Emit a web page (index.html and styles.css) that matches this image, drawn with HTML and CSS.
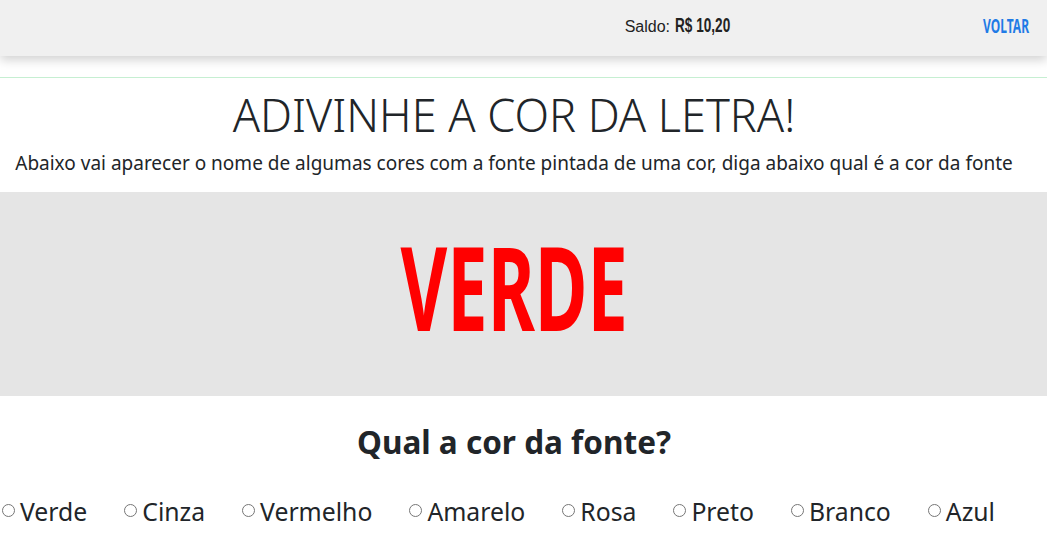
FILE: index.html
```html
<!DOCTYPE html>
<html lang="pt-BR">
<head>
<meta charset="utf-8">
<title>Adivinhe a cor da letra</title>
<link rel="stylesheet" href="styles.css">
</head>
<body>
<header class="topbar">
  <div class="saldo">Saldo: <span class="saldo-valor">R$ 10,20</span></div>
  <a class="voltar" href="#">VOLTAR</a>
</header>
<div class="divider"></div>
<main>
  <h1 class="title">ADIVINHE A COR DA LETRA!</h1>
  <p class="subtitle">Abaixo vai aparecer o nome de algumas cores com a fonte pintada de uma cor, diga abaixo qual é a cor da fonte</p>
  <section class="stage">
    <div class="word">VERDE</div>
  </section>
  <h2 class="question">Qual a cor da fonte?</h2>
  <form class="options">
    <label class="option"><input type="radio" name="cor"><span>Verde</span></label>
    <label class="option"><input type="radio" name="cor"><span>Cinza</span></label>
    <label class="option"><input type="radio" name="cor"><span>Vermelho</span></label>
    <label class="option"><input type="radio" name="cor"><span>Amarelo</span></label>
    <label class="option"><input type="radio" name="cor"><span>Rosa</span></label>
    <label class="option"><input type="radio" name="cor"><span>Preto</span></label>
    <label class="option"><input type="radio" name="cor"><span>Branco</span></label>
    <label class="option"><input type="radio" name="cor"><span>Azul</span></label>
  </form>
</main>
</body>
</html>
```
FILE: styles.css
```css
* { box-sizing: border-box; }
body {
  margin: 0;
  font-family: "Noto Sans", "Open Sans", sans-serif;
  color: #212529;
  background: #fff;
  overflow: hidden;
}
.topbar {
  height: 56px;
  background: #f0f0f0;
  box-shadow: 0 4px 10px rgba(0,0,0,0.18);
  display: flex;
  align-items: center;
  justify-content: flex-end;
  padding: 0 18px 5px 0;
  position: relative;
}
.saldo {
  display: flex;
  align-items: baseline;
  font-family: "Liberation Sans", Arial, sans-serif;
  font-size: 16px;
  color: #222;
  margin-right: 253px;
}
.saldo-valor {
  display: inline-block;
  margin-left: 5px;
  font-weight: bold;
  font-size: 20px;
  color: #222;
  transform: scaleX(0.68);
  transform-origin: left center;
  width: 57px;
  white-space: nowrap;
}
.voltar {
  display: inline-block;
  font-weight: bold;
  font-size: 20px;
  color: #1f7be6;
  text-decoration: none;
  transform: scaleX(0.6);
  transform-origin: right center;
  width: 44px;
  white-space: nowrap;
  direction: rtl;
}
.divider {
  margin-top: 21px;
  height: 1px;
  background: #c6efd2;
}
.title {
  margin: 10px 0 0;
  padding-right: 19px;
  text-align: center;
  font-weight: 300;
  font-size: 45px;
  line-height: 1.2;
}
.subtitle {
  margin: 7px 0 0;
  padding-right: 19px;
  text-align: center;
  font-size: 19px;
  line-height: 1.5;
}
.stage {
  margin-top: 14px;
  height: 204px;
  padding-right: 19px;
  background: #e5e5e5;
  display: flex;
  align-items: center;
  justify-content: center;
}
.word {
  font-weight: bold;
  font-size: 116px;
  color: #ff0000;
  line-height: 1;
  transform: scaleX(0.62);
  margin-bottom: 15px;
}
.question {
  margin: 27px 0 0;
  padding-right: 19px;
  text-align: center;
  font-weight: bold;
  font-size: 31.5px;
  line-height: 1.2;
}
.options {
  margin-top: 35px;
  display: flex;
  gap: 37px;
  padding-left: 2px;
}
.option {
  display: flex;
  align-items: center;
  font-size: 24.75px;
}
.option input {
  margin: 0 5px 3px 0;
  width: 13px;
  height: 13px;
}
```
